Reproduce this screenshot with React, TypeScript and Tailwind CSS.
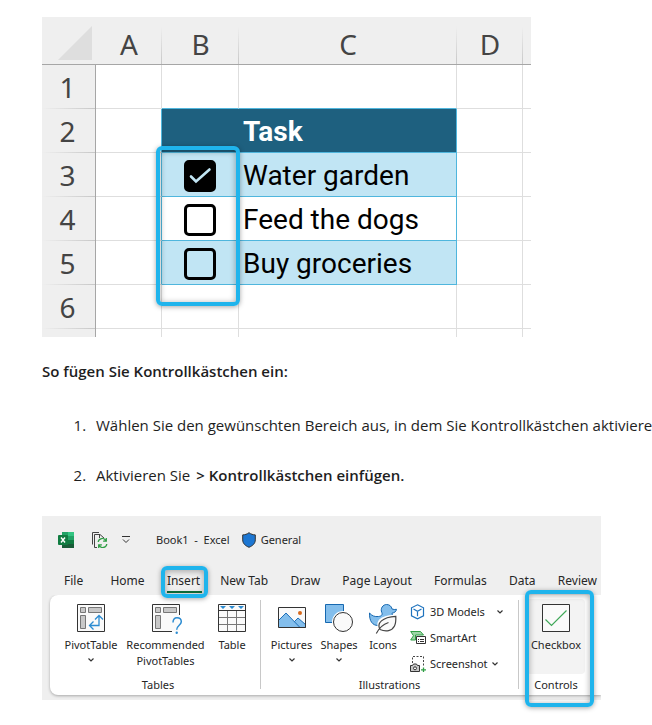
import type { ReactNode } from 'react';
import { useState } from 'react';

interface Task {
  row: number;
  label: string;
  done: boolean;
}

const INITIAL_TASKS: Task[] = [
  { row: 3, label: 'Water garden', done: true },
  { row: 4, label: 'Feed the dogs', done: false },
  { row: 5, label: 'Buy groceries', done: false },
];

const TABS = ['File', 'Home', 'Insert', 'New Tab', 'Draw', 'Page Layout', 'Formulas', 'Data', 'Review'];

export default function App() {
  return (
    <main className="overflow-hidden bg-white pl-[42px] pt-[17px] font-['Open_Sans','Noto_Sans',sans-serif] text-[#1e1e1e]">
      <Spreadsheet />
      <h2 className="mt-[22px] text-[15px] leading-6 font-semibold">So fügen Sie Kontrollkästchen ein:</h2>
      <ol className="mt-[30px] list-decimal space-y-[26px] pl-12 text-[15px] leading-6 whitespace-nowrap">
        <li className="pl-[6px]">Wählen Sie den gewünschten Bereich aus, in dem Sie Kontrollkästchen aktiviere</li>
        <li className="pl-[6px]">
          Aktivieren Sie <b className="ml-[2px] font-semibold">&gt; Kontrollkästchen einfügen.</b>
        </li>
      </ol>
      <Ribbon />
    </main>
  );
}

function Spreadsheet() {
  const [tasks, setTasks] = useState(INITIAL_TASKS);

  function toggle(row: number) {
    setTasks((list) => list.map((t) => (t.row === row ? { ...t, done: !t.done } : t)));
  }

  return (
    <div className="relative w-full max-w-[489px]">
      <table className="w-full table-fixed border-separate border-spacing-0 text-[28px] leading-8">
        <colgroup>
          <col className="w-[54px]" />
          <col className="w-[66px]" />
          <col className="w-[77px]" />
          <col />
          <col className="w-[66px]" />
          <col className="w-2" />
        </colgroup>
        <thead>
          <tr className="h-12 bg-[#efefef]">
            <td className="border-b border-[#a6a6a6] p-0">
              <svg className="ml-4 mt-1 size-[34px]" viewBox="0 0 34 34">
                <path d="M34 0v34H0z" fill="#dedede" />
              </svg>
            </td>
            {['A', 'B', 'C', 'D'].map((name) => (
              <ColumnHead key={name} name={name} />
            ))}
            <td className="border-b border-[#a6a6a6] p-0" />
          </tr>
        </thead>
        <tbody>
          <tr className="h-11">
            <RowHead row={1} />
            <Cell />
            <Cell className="border-r-[#dedede] border-b-[#4fb6dd]" />
            <Cell className="border-r-[#dedede] border-b-[#4fb6dd]" />
            <Cell />
            <Cell last />
          </tr>
          <tr className="h-11">
            <RowHead row={2} />
            <Cell className="border-r-[#4fb6dd] border-b-[#dedede]" />
            <Cell className="border-r-[#1e607f] border-b-[#4fb6dd] bg-[#1e607f]" />
            <Cell className="border-[#4fb6dd] bg-[#1e607f] font-bold text-white">Task</Cell>
            <Cell />
            <Cell last />
          </tr>
          {tasks.map((task) => {
            const band = task.row % 2 === 1;
            return (
              <tr key={task.row} className="h-11">
                <RowHead row={task.row} />
                <Cell className="border-r-[#4fb6dd] border-b-[#dedede]" />
                <Cell className={band ? 'border-r-[#c1e5f4] border-b-[#4fb6dd] bg-[#c1e5f4]' : 'border-r-white border-b-[#4fb6dd]'}>
                  <TaskCheckbox task={task} onToggle={() => toggle(task.row)} />
                </Cell>
                <Cell className={band ? 'border-[#4fb6dd] bg-[#c1e5f4]' : 'border-[#4fb6dd]'}>
                  <label htmlFor={`task-${task.row}`}>{task.label}</label>
                </Cell>
                <Cell />
                <Cell last />
              </tr>
            );
          })}
          <tr className="h-11">
            <RowHead row={6} />
            <Cell />
            <Cell />
            <Cell />
            <Cell />
            <Cell last />
          </tr>
          <tr className="h-2">
            <td className="border-r border-[#a6a6a6] bg-[#efefef] p-0" />
            {[0, 1, 2, 3].map((i) => (
              <td key={i} className="border-r border-[#dedede] p-0" />
            ))}
            <td className="p-0" />
          </tr>
        </tbody>
      </table>
      <Highlight className="top-[129px] left-[114px] h-[160px] w-[84px]" />
    </div>
  );
}

function ColumnHead({ name }: { name: string }) {
  return (
    <th className="border-b border-[#a6a6a6] bg-[linear-gradient(to_bottom,#efefef_20%,#c8c8c8)] bg-[length:1px_100%] bg-right bg-no-repeat p-0 pt-[6px] text-center font-['Noto_Sans','Open_Sans',sans-serif] font-normal text-[#444]">
      {name}
    </th>
  );
}

function RowHead({ row }: { row: number }) {
  return (
    <th className="border-r border-[#a6a6a6] bg-[#efefef] bg-[linear-gradient(to_right,#efefef,#c8c8c8)] bg-[length:100%_1px] bg-bottom bg-no-repeat p-0 pr-[2px] text-center font-['Noto_Sans','Open_Sans',sans-serif] font-normal text-[#444]">
      {row}
    </th>
  );
}

function Cell({ className = 'border-[#dedede]', last, children }: { className?: string; last?: boolean; children?: ReactNode }) {
  return (
    <td
      className={`border-b p-0 px-1 pt-[2px] font-['Roboto','Open_Sans',sans-serif] whitespace-nowrap text-black ${
        last ? '' : 'border-r'
      } ${className}`}
    >
      {children}
    </td>
  );
}

function TaskCheckbox({ task, onToggle }: { task: Task; onToggle: () => void }) {
  return (
    <span className="relative mx-auto block size-8">
      <input
        id={`task-${task.row}`}
        type="checkbox"
        checked={task.done}
        onChange={onToggle}
        className="block size-8 appearance-none rounded-[5px] border-3 border-black checked:bg-black"
      />
      {task.done && (
        <svg
          className="pointer-events-none absolute inset-0"
          viewBox="0 0 32 32"
          fill="none"
          stroke="#c1e5f4"
          strokeWidth="2.6"
          strokeLinecap="round"
        >
          <path d="M7 16.500l5 5L25.500 9.500" />
        </svg>
      )}
    </span>
  );
}

function Highlight({ className }: { className: string }) {
  return (
    <span
      className={`pointer-events-none absolute z-10 block rounded-md border-4 border-[#1fb4ec] shadow-[0_1px_5px_rgba(0,0,0,0.35),inset_0_1px_6px_rgba(0,0,0,0.35)] ${className}`}
    />
  );
}

function Ribbon() {
  return (
    <section className="relative mt-[29px] mb-[25px] w-full max-w-[559px] bg-[#efefef] pb-[5px] font-['Noto_Sans','Open_Sans',sans-serif] text-[12px] leading-4 text-[#262626]">
      <header className="flex h-12 items-center pl-4 text-[11px]">
        <ExcelIcon />
        <button className="ml-[18px]" aria-label="Refresh">
          <RefreshIcon />
        </button>
        <button className="ml-[14px]" aria-label="Customize toolbar">
          <svg className="size-2" viewBox="0 0 8 8" fill="none" stroke="#333">
            <path d="M0 .5h8M1 3.500l3 3 3-3" />
          </svg>
        </button>
        <span className="ml-[26px] whitespace-pre">Book1  -  Excel</span>
        <svg className="ml-3 h-4 w-[14px]" viewBox="0 0 14 16">
          <path d="M7 .7C5 2.200 3 2.800.7 2.900v5c0 3.500 2.500 5.800 6.300 7.400 3.800-1.600 6.300-3.900 6.300-7.400v-5C11 2.800 9 2.200 7 .7z" fill="#1c76d2" stroke="#333" />
        </svg>
        <span className="ml-[5px]">General</span>
      </header>
      <nav className="flex h-[31px] items-center justify-between pt-[2px] pr-1 pl-[22px]">
        {TABS.map((tab) => (
          <Tab key={tab} name={tab} active={tab === 'Insert'} />
        ))}
      </nav>
      <div className="ml-2 flex h-[100px] rounded-l-lg bg-white shadow-[0_1px_3px_rgba(0,0,0,0.3)] [clip-path:inset(0_0_-5px_-5px)]">
        <Group label="Tables" className="w-[211px] pl-[11px]">
          <Tool label="PivotTable" className="w-[60px]" icon={<PivotIcon />} menu />
          <Tool label="Recommended PivotTables" className="w-[89px]" icon={<RecommendedIcon />} />
          <Tool label="Table" className="w-[44px]" icon={<TableIcon />} />
        </Group>
        <Group label="Illustrations" className="w-[258px] pl-[5px]">
          <Tool label="Pictures" className="w-[51px]" icon={<PicturesIcon />} menu />
          <Tool label="Shapes" className="w-[44px]" icon={<ShapesIcon />} menu />
          <Tool label="Icons" className="w-[44px]" icon={<DuckIcon />} />
          <div className="ml-[5px] flex flex-col gap-[10px] pt-[5px] text-[11px]">
            <button className="flex items-center gap-1">
              <CubeIcon />
              <span className="mr-2">3D Models</span>
              <Chevron />
            </button>
            <button className="flex items-center gap-1">
              <SmartArtIcon />
              SmartArt
            </button>
            <button className="flex items-center gap-1">
              <ScreenshotIcon />
              Screenshot
              <Chevron />
            </button>
          </div>
        </Group>
        <section className="flex w-[74px] flex-col items-center pt-1">
          <div className="h-[75px] rounded bg-[#f3f3f3]">
            <Tool label="Checkbox" className="w-[58px]" icon={<CheckboxIcon />} />
          </div>
          <h3 className="mt-[3px] text-[11px]">Controls</h3>
        </section>
      </div>
      <Highlight className="top-[74px] left-[483px] h-[117px] w-[69px]" />
    </section>
  );
}

function Tab({ name, active }: { name: string; active: boolean }) {
  if (!active) return <button className="whitespace-nowrap first:mr-[5px]">{name}</button>;
  return (
    <button className="relative -mr-1 w-[35px] text-left">
      {name}
      <span className="absolute inset-x-0 -bottom-1 h-[2px] bg-[#0f703b]" />
      <Highlight className="-inset-x-[6px] -top-[7px] -bottom-[9px]" />
    </button>
  );
}

function Group({ label, className, children }: { label: string; className: string; children: ReactNode }) {
  return (
    <section className={`relative flex shrink-0 flex-col pt-1 pr-[6px] ${className}`}>
      <div className="flex h-[78px] items-start">{children}</div>
      <h3 className="text-center text-[11px]">{label}</h3>
      <span className="absolute top-[5px] right-0 h-[89px] w-px bg-[#c8c8c8]" />
    </section>
  );
}

function Tool({ label, icon, menu, className }: { label: string; icon: ReactNode; menu?: boolean; className: string }) {
  return (
    <button className={`flex shrink-0 flex-col items-center pt-[5px] text-[11px] ${className}`}>
      {icon}
      <span className="mt-[5px]">{label}</span>
      {menu && (
        <span className="mt-[5px]">
          <Chevron />
        </span>
      )}
    </button>
  );
}

function Chevron() {
  return (
    <svg className="h-1 w-[6px]" viewBox="0 0 6 4" fill="none" stroke="#333" strokeWidth="1.200">
      <path d="M.5.500L3 3 5.500.500" />
    </svg>
  );
}

function ExcelIcon() {
  return (
    <svg className="size-4" viewBox="0 0 16 16">
      <path d="M4 0h6v8H4z" fill="#21a366" />
      <path d="M10 0h6v4h-6z" fill="#33c481" />
      <path d="M10 4h6v4h-6z" fill="#21a366" />
      <path d="M4 8h6v8H4z" fill="#185c37" />
      <path d="M10 8h6v4h-6z" fill="#107c41" />
      <path d="M10 12h6v4h-6z" fill="#185c37" />
      <path d="M4 4h6v4H4z" fill="#107c41" />
      <rect y="3" width="10" height="10" rx="1" fill="#107c41" />
      <path d="M3 5.500l4 5M7 5.500l-4 5" stroke="#fff" strokeWidth="1.400" />
    </svg>
  );
}

function RefreshIcon() {
  return (
    <svg className="h-4 w-4" viewBox="0 0 16 16" fill="none">
      <path d="M.5 12.500V.5H7M5 15.500H2.500V2.500H8l4 3.500M7.500 2.500V6" stroke="#444" />
      <g stroke="#2f9e44" strokeWidth="1.300">
        <path d="M6.200 10a4 4 0 0 1 7.600-1.200M14.300 6v3.200h-3.200M14.800 12a4 4 0 0 1-7.600 1.200M6.700 16v-3.200h3.200" />
      </g>
    </svg>
  );
}

function PivotIcon() {
  return (
    <svg className="size-7" viewBox="0 0 28 28" fill="none">
      <path d="M.5.500h27v27H.5z" fill="#fafafa" stroke="#333" />
      <path d="M3.500 3.500h5v5h-5zM11.500 3.500h13v5h-13zM3.500 11.500h5v13h-5z" fill="#c8c8c8" stroke="#777" />
      <path d="M12.500 21.500h9.500V12M16.500 17.500l-4 4 4 4M18 15.500l4-4 4 4" stroke="#2b8bd1" strokeWidth="1.300" />
    </svg>
  );
}

function RecommendedIcon() {
  return (
    <svg className="size-7 overflow-visible" viewBox="0 0 28 28" fill="none">
      <path d="M.5.500h27v27H.5z" fill="#fafafa" />
      <path d="M27.500 11V.5H.5v27H20" stroke="#333" />
      <path d="M3.500 3.500h5v5h-5zM11.500 3.500h13v5h-13zM3.500 11.500h5v13h-5z" fill="#c8c8c8" stroke="#777" />
      <path d="M21 18.500c0-3.200 1.500-4.700 4-4.700s4.300 1.500 4.300 4c0 3.400-4.600 3.700-4.600 8" stroke="#2b8bd1" strokeWidth="1.500" />
      <circle cx="24.700" cy="28.800" r="1.200" fill="#2b8bd1" />
    </svg>
  );
}

function TableIcon() {
  return (
    <svg className="size-7" viewBox="0 0 28 28" fill="none">
      <path d="M.5.500h27v27H.5z" fill="#fafafa" />
      <path d="M.5 13.500h27M.5 20.500h27M9.500 7v20M18.500 7v20" stroke="#777" />
      <path d="M.5.500h27v27H.5zM.5 6.500h27" stroke="#333" />
      <path d="M2 2h6L5 5zM11 2h6l-3 3zM20 2h6l-3 3z" fill="#2b8bd1" />
    </svg>
  );
}

function PicturesIcon() {
  return (
    <svg className="size-7" viewBox="0 0 28 28" fill="none">
      <path d="M.5 3.500h27v20H.5z" fill="#fafafa" />
      <path d="M16 18l4-4 7.500 6.500v3H18z" fill="#83beec" stroke="#1e6fb8" />
      <path d="M.5 16.500L8 9l14 14.500H.5z" fill="#83beec" />
      <path d="M.5 16.500L8 9l14 14.500" stroke="#1e6fb8" />
      <path d="M.5 3.500h27v20H.5z" stroke="#333" />
      <circle cx="22" cy="9" r="2" fill="#d8691c" />
    </svg>
  );
}

function ShapesIcon() {
  return (
    <svg className="size-7" viewBox="0 0 28 28">
      <path d="M.5.500h18v18H.5z" fill="#83beec" stroke="#1668b0" />
      <circle cx="18" cy="18" r="11" fill="#fff" />
      <circle cx="18" cy="18" r="9.500" fill="#fafafa" stroke="#333" />
    </svg>
  );
}

function DuckIcon() {
  return (
    <svg className="size-7 overflow-visible" viewBox="0 0 28 28">
      <path
        d="M12.800 8.500C11 4.500 14 .5 17.500.5c2.800 0 5 1.600 5.500 4.500 1.500.6 3 .7 4.500.3-.3 2.200-1.900 3.500-4.300 3.700-.5 1.200.8 2 .8 4.500 0 5-4 8-8 8H9C3.500 21.500.2 17 .5 9c2.500 2.800 5 4 9 3.500 3-.3 4.300-1.800 3.300-4z"
        fill="#83beec"
        stroke="#1668b0"
      />
      <path d="M5.500 29.500L9 24C6.500 16 12 11 28.500 10.500v8L22 28.500z" fill="#fff" />
      <path
        d="M11 25.500C7.500 19.500 13 13 26.800 12.300c.2 4.200 0 7.200-1.300 9.700-2.500 5-8.500 6-14.500 3.500z"
        fill="#fafafa"
        stroke="#444"
        strokeWidth="1.200"
      />
      <path d="M7.300 29.500C9.500 25 13.500 20.500 19.500 18.500" fill="none" stroke="#444" strokeWidth="1.200" />
    </svg>
  );
}

function CubeIcon() {
  return (
    <svg className="size-4" viewBox="0 0 16 16" fill="none" stroke="#1e73be" strokeWidth="1.200">
      <path d="M7.500.8l6 3v8l-6 3-6-3v-8zM3.500 5l4 2.200 4-2.200M7.500 7.200v5" />
    </svg>
  );
}

function SmartArtIcon() {
  return (
    <svg className="size-4" viewBox="0 0 16 16" fill="none">
      <path d="M.7 1.500h9.800L13.500 5H5.500v5H.7L3.500 5.700z" fill="#9ed6a8" stroke="#2f9e44" />
      <path d="M6.500 6.500h9v7h-9z" fill="#fff" stroke="#333" />
      <path d="M8 9.500h1M10 9.500h4M8 11.500h1M10 11.500h4" stroke="#333" />
    </svg>
  );
}

function ScreenshotIcon() {
  return (
    <svg className="size-4" viewBox="0 0 16 16" fill="none">
      <path d="M2.500 7V.5H13.500V10" stroke="#444" strokeDasharray="2 1.500" />
      <path d="M.5 9.500h2l1-1.500h3l1 1.500h2v6h-9z" fill="#c8c8c8" stroke="#333" />
      <circle cx="5" cy="12.300" r="1.500" fill="#fff" stroke="#333" />
      <path d="M13.500 11.500v5M11 13.800h5" stroke="#2f9e44" strokeWidth="1.300" />
    </svg>
  );
}

function CheckboxIcon() {
  return (
    <svg className="size-7" viewBox="0 0 28 28" fill="none">
      <path d="M.5.500h27v27H.5z" fill="#fafafa" stroke="#333" />
      <path d="M3.500 15.500l6 6L24.500 6.500" stroke="#3fa858" strokeWidth="1.200" />
    </svg>
  );
}
